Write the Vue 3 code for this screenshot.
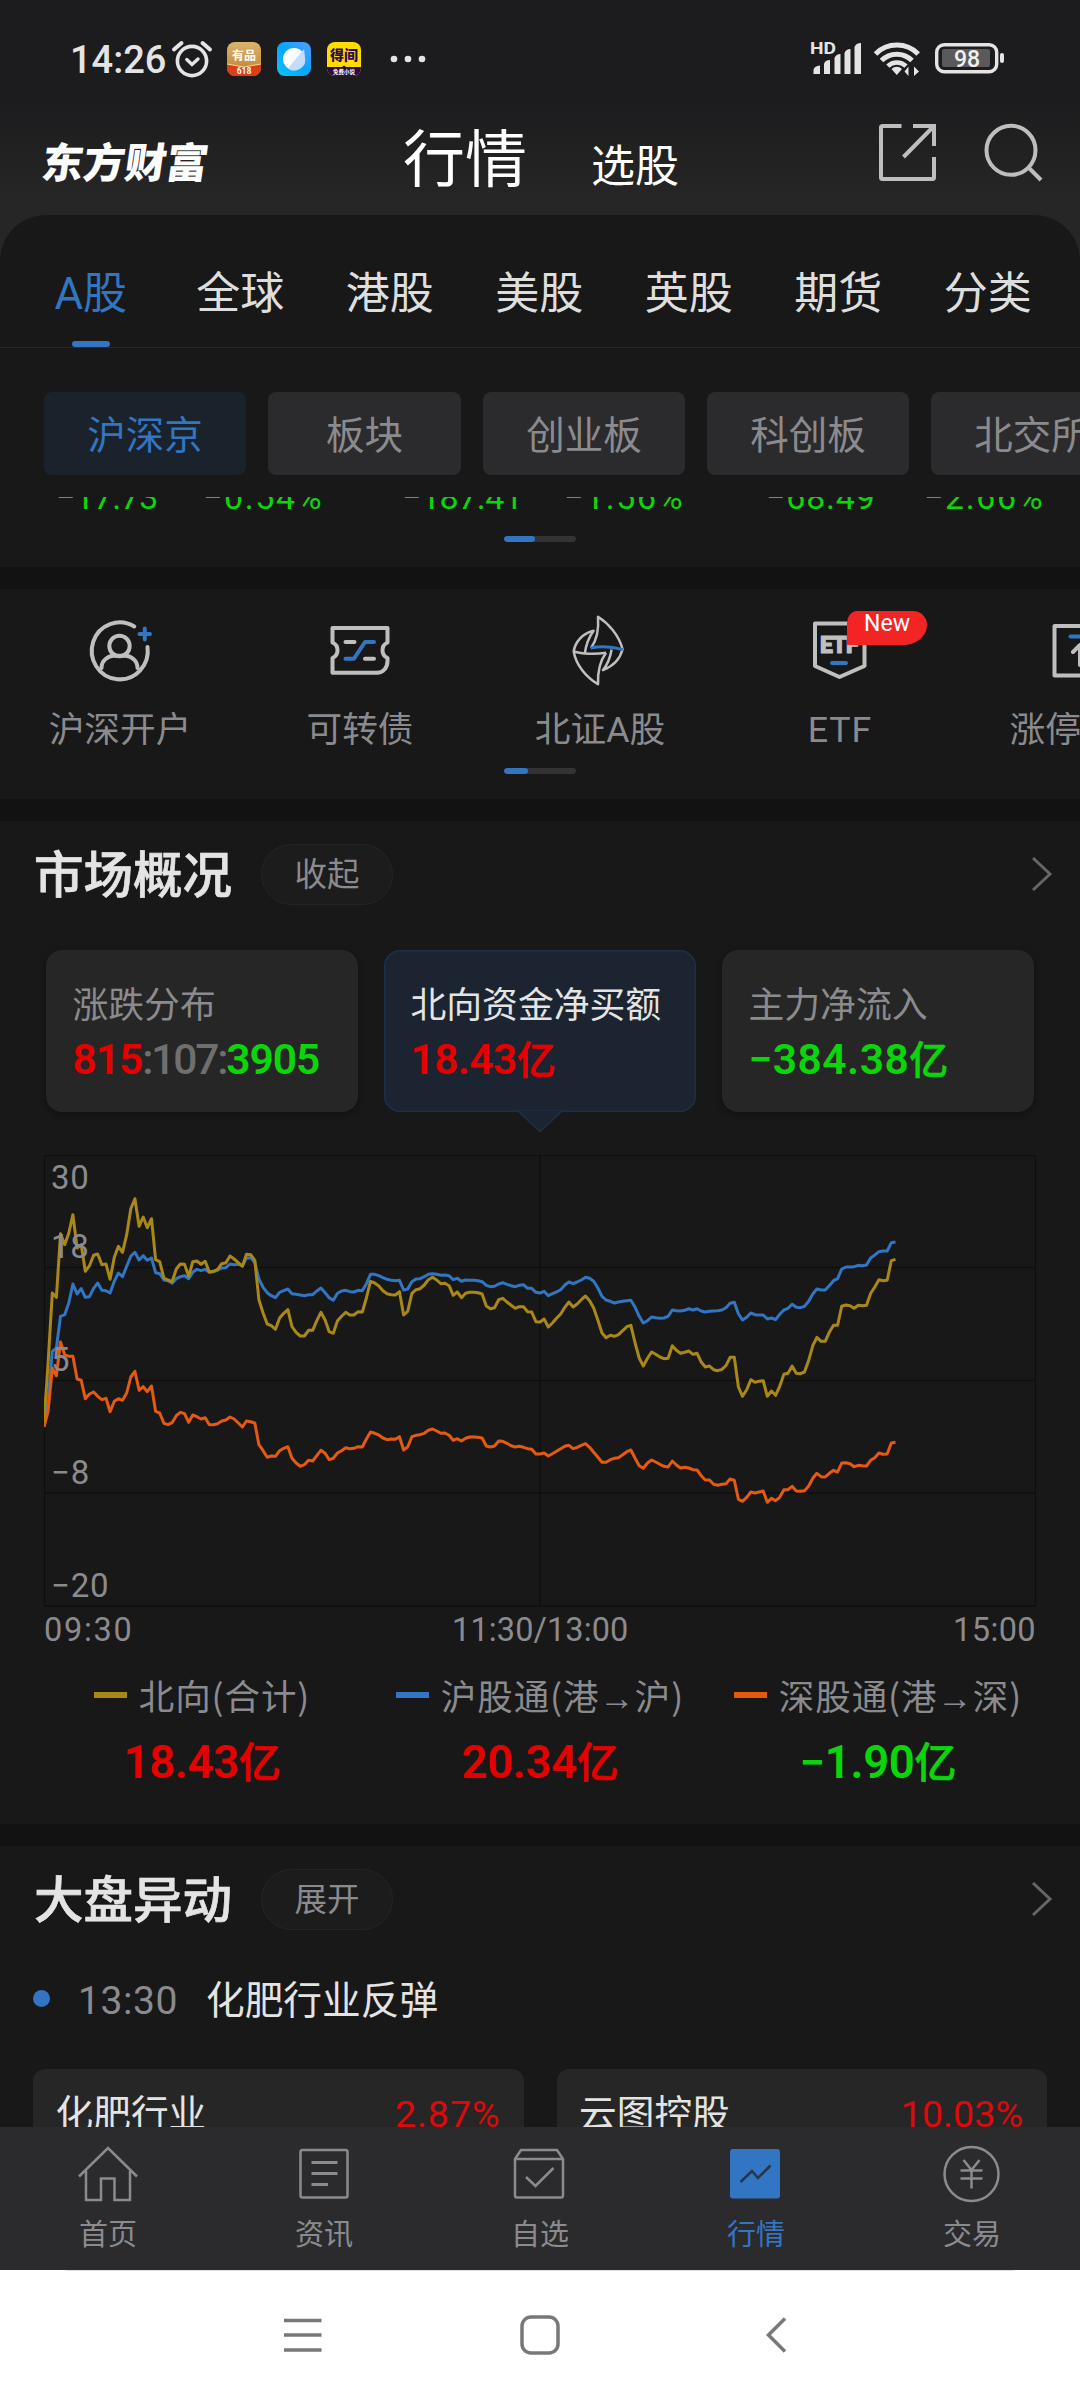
<script setup>
const tabs = ['A股', '全球', '港股', '美股', '英股', '期货', '分类']
const chips = [
  { name: '沪深京', w: 202 },
  { name: '板块', w: 193 },
  { name: '创业板', w: 202 },
  { name: '科创板', w: 202 },
  { name: '北交所', w: 202 }
]
const quotes = [
  { change: '−17.73', pct: '−0.54%' },
  { change: '−187.41', pct: '−1.56%' },
  { change: '−68.49', pct: '−2.66%' }
]
const legend = [
  { name: '北向(合计)', value: '18.43', cls: 'up', color: '#a98818' },
  { name: '沪股通(港→沪)', value: '20.34', cls: 'up', color: '#3275c2' },
  { name: '深股通(港→深)', value: '−1.90', cls: 'down', color: '#e55a08' }
]
const yLabels = [
  { text: '30', top: 3 },
  { text: '18', top: 72 },
  { text: '5', top: 185 },
  { text: '−8', top: 298 },
  { text: '−20', top: 411 }
]

/* One sample per trading minute, level measured downwards from the plot top (76 = top, 1427 = bottom). */
const total = [878,700,490,503,312,345,310,255,355,345,425,408,377,373,405,403,449,383,350,368,315,237,207,290,262,294,267,390,396,445,451,456,418,403,404,440,396,394,404,395,427,425,419,402,399,379,388,399,410,374,375,392,510,550,583,588,599,565,551,540,591,608,619,619,602,602,573,548,571,606,611,573,560,548,556,556,546,547,505,455,460,469,483,492,495,496,486,556,545,491,480,477,466,450,443,451,462,461,468,497,487,504,491,488,488,489,493,529,537,534,510,506,517,527,536,531,531,546,547,576,577,568,592,580,566,553,533,517,532,523,510,499,513,535,572,610,624,617,620,615,603,591,587,640,685,709,686,667,674,682,687,686,648,662,671,668,664,674,671,697,712,709,720,723,719,708,683,683,772,800,780,750,758,755,753,800,784,797,770,734,731,709,731,732,727,692,648,623,635,635,608,587,587,530,526,528,536,527,528,527,491,472,450,453,452,393,389]
const shanghai = [885,810,665,655,560,555,520,463,493,477,503,501,476,460,482,483,490,455,430,441,410,380,368,391,378,392,385,429,432,451,453,461,447,441,438,447,428,419,423,419,428,426,422,415,414,403,405,404,408,385,384,398,448,473,489,498,504,488,483,478,492,494,496,498,495,495,484,475,489,504,512,491,484,482,486,487,482,483,462,434,434,438,444,449,452,453,452,481,478,456,448,447,441,434,432,434,437,436,438,450,446,455,451,452,452,453,456,467,471,470,463,459,464,468,471,467,465,476,476,488,490,485,498,492,487,480,466,457,462,457,451,443,446,455,475,500,511,515,520,517,515,513,512,533,560,580,573,562,564,566,565,560,541,543,544,542,537,541,537,544,547,545,544,543,541,534,521,518,552,571,563,550,555,556,556,568,565,570,554,541,536,524,533,534,530,515,493,478,481,481,468,453,447,418,412,412,411,407,408,406,385,376,366,364,364,339,337]
const shenzhen = [892,845,715,738,637,675,680,680,748,752,807,793,787,800,810,806,846,815,807,812,790,742,725,782,771,786,769,845,850,881,885,879,858,848,852,878,856,861,868,864,885,885,882,874,871,862,868,880,892,874,876,880,945,963,983,979,980,963,956,951,986,1000,1010,1005,992,994,978,962,971,990,986,970,963,954,957,956,951,952,928,907,911,916,925,930,928,929,921,961,952,921,917,915,911,902,898,904,911,910,917,932,927,934,926,922,922,923,925,949,952,949,934,935,941,948,952,950,953,957,959,973,973,970,979,972,965,957,950,947,957,953,947,942,953,968,983,998,998,990,986,984,975,966,961,986,1008,1016,1000,991,997,1004,1010,1012,994,1006,1015,1013,1015,1020,1021,1038,1051,1051,1064,1067,1064,1062,1048,1052,1109,1115,1103,1087,1090,1087,1084,1118,1106,1113,1103,1080,1080,1070,1084,1085,1083,1069,1046,1031,1041,1042,1031,1022,1027,1000,999,1002,1011,1007,1008,1009,992,984,970,974,973,940,938]
const toLine = (s) => s.map((v, i) => `${(i * 4.1333).toFixed(1)},${((v - 76) / 3).toFixed(1)}`).join(' ')
const lines = [
  { points: toLine(shanghai), color: '#3275c2' },
  { points: toLine(shenzhen), color: '#e55a12' },
  { points: toLine(total), color: '#a98818' }
]
</script>

<template>
  <div class="page">
    <header class="top">
      <div class="status">
        <span class="clock">14:26</span>
        <svg class="alarm" width="42" height="40" viewBox="0 0 42 40" fill="none" stroke="#e4e4e4">
          <circle cx="21" cy="22" r="14.6" stroke-width="3.6" />
          <path d="M3 10.5 10.5 4M39 10.5 31.500 4" stroke-width="4" stroke-linecap="round" />
          <path d="M15.800 20.500 21 25.500 27 20" stroke-width="3.400" stroke-linecap="round" />
        </svg>
        <svg class="app" width="34" height="34" viewBox="0 0 34 34">
          <defs>
            <linearGradient id="gold" x1="0" y1="0" x2="0" y2="1"><stop offset="0" stop-color="#dcb36c" /><stop offset="1" stop-color="#b9812f" /></linearGradient>
            <linearGradient id="sky" x1="1" y1="0" x2="0" y2="1"><stop offset="0" stop-color="#559cff" /><stop offset=".5" stop-color="#04a6ff" /><stop offset="1" stop-color="#10c4ff" /></linearGradient>
            <clipPath id="tile"><rect width="34" height="34" rx="8" /></clipPath>
          </defs>
          <g clip-path="url(#tile)">
            <rect width="34" height="34" fill="url(#gold)" />
            <path d="M0 22 17 25 34 22V34H0Z" fill="#d93f18" />
            <path d="M0 22 17 25 34 22" stroke="#f6d9a0" fill="none" />
            <text x="17" y="18" font-size="12" font-weight="700" fill="#fff" text-anchor="middle">有品</text>
            <text x="17" y="32" font-size="8.500" font-weight="700" fill="#fff" text-anchor="middle">618</text>
          </g>
        </svg>
        <svg class="app" width="34" height="34" viewBox="0 0 34 34">
          <rect width="34" height="34" rx="8" fill="url(#sky)" />
          <circle cx="17" cy="17" r="11" fill="#fdfdff" />
          <path d="M27 7 28 15A11 11 0 0 1 11 26.500Z" fill="#c3dcfb" />
        </svg>
        <svg class="app" width="34" height="34" viewBox="0 0 34 34">
          <g clip-path="url(#tile)">
            <rect width="34" height="34" fill="#ffdc00" />
            <path d="M0 25H15L17 23.500 19 25H34V34H0Z" fill="#2c0a4e" />
            <text x="17" y="18" font-size="14" font-weight="900" fill="#2c0a4e" text-anchor="middle">得间</text>
            <text x="17" y="31.500" font-size="5.500" font-weight="700" fill="#fff" text-anchor="middle">免费小说</text>
          </g>
        </svg>
        <svg class="dots" width="36" height="10" viewBox="0 0 36 10" fill="#e4e4e4">
          <circle cx="4" cy="5" r="3.300" /><circle cx="18" cy="5" r="3.300" /><circle cx="32" cy="5" r="3.300" />
        </svg>
        <svg class="sys" width="200" height="40" viewBox="808 40 200 40">
          <text x="810" y="55" font-size="17" font-weight="700" fill="#e4e4e4" textLength="26" lengthAdjust="spacingAndGlyphs">HD</text>
          <g fill="#e4e4e4">
            <path d="M813.500 75V71Q814 67 820 66.500V75ZM824 75V65Q825 61 830 61V75ZM834.500 75V59Q836 55 840.500 55V75ZM844.500 75V54Q846 50 850.500 50V75ZM854.500 75V48Q856 44 861 44V75Z" stroke-linejoin="round" />
            <path d="M891.500 70 896.800 76 902 70A7.500 7.500 0 0 0 891.500 70Z" />
            <path d="M908.500 67.500V77L904.500 72.500ZM914 77V67.500L919 72.500Z" />
            <rect x="1000" y="54" width="4" height="10" rx="2" />
          </g>
          <g fill="none" stroke="#e4e4e4" stroke-width="5">
            <path d="M875.500 55A30 30 0 0 1 918.200 55" />
            <path d="M881.500 61.500A21.500 21.500 0 0 1 912 61.500" />
            <path d="M887.800 67.200A13 13 0 0 1 906 67.200" stroke-width="4.600" />
            <rect x="936.700" y="45.700" width="60" height="27" rx="7.500" stroke-width="3.400" />
          </g>
          <rect x="942" y="50" width="48" height="18" rx="2" fill="#5a5a5c" />
          <text x="967" y="67.500" font-size="23" font-weight="500" fill="#f0f0f0" text-anchor="middle">98</text>
        </svg>
      </div>
      <div class="titlebar">
        <span class="logo">东方财富</span>
        <span class="main">行情</span>
        <span class="sub">选股</span>
        <svg class="tools" width="170" height="64" viewBox="876 120 170 64" fill="none" stroke="#bebebe" stroke-width="4">
          <path d="M901.500 126H882.500Q881 126 881 127.500V177.500Q881 179 882.500 179H932.500Q934 179 934 177.500V157" />
          <path d="M913 126H934V146M933.500 126.500 903.500 157" />
          <circle cx="1011" cy="150.300" r="24.500" />
          <path d="M1028.500 167.500 1041 180" />
        </svg>
      </div>
    </header>

    <section class="panel">
      <nav class="tabs">
        <span v-for="(t, i) in tabs" :key="t" class="tab" :class="{ on: i === 0 }">{{ t }}</span>
      </nav>
      <div class="chips">
        <span v-for="(c, i) in chips" :key="c.name" class="chip" :class="{ on: i === 0 }" :style="{ width: c.w + 'px' }">{{ c.name }}</span>
      </div>
      <div class="quotes">
        <div v-for="q in quotes" :key="q.change" class="quote"><span class="chg">{{ q.change }}</span><span class="pct">{{ q.pct }}</span></div>
      </div>
      <div class="pager"><i class="a"></i></div>
    </section>

    <section class="entries">
      <div class="entry-row">
        <div class="entry">
          <svg width="72" height="72" viewBox="0 0 72 72" fill="none" stroke="#bfbfbf" stroke-width="4" stroke-linecap="round">
            <path d="M50.300 11.500A28 28.500 0 1 0 63.500 32" />
            <circle cx="35.500" cy="31" r="10.200" />
            <path d="M17.500 53C17.500 45 24.500 41 29.500 40.800H41.500C46.500 41 53.500 45 53.500 53" />
            <path d="M55.500 19H66M60.800 13.500V24.500" stroke="#3275c2" />
          </svg>
          <span>沪深开户</span>
        </div>
        <div class="entry">
          <svg width="72" height="72" viewBox="0 0 72 72" fill="none" stroke="#bfbfbf" stroke-width="4" stroke-linecap="round" stroke-linejoin="round">
            <path d="M8.500 13H63.500V27.500A8.500 8.500 0 0 0 63.500 43V46C63.500 53 59 57.700 53 57.700H8.500V43A8.500 8.500 0 0 0 8.500 27.500Z" />
            <path d="M21.500 27H30.500M41 43.700H50" />
            <path d="M21.500 43.700H30L41 27H50" stroke="#3275c2" />
          </svg>
          <span>可转债</span>
        </div>
        <div class="entry">
          <svg width="72" height="72" viewBox="0 0 72 72" fill="none" stroke="#bfbfbf" stroke-width="2.500" stroke-linejoin="round">
            <path d="M27 33C33 25 35 15 34 1.700C44 8 55 20 58.600 34.300C56 44 50 51 39 55C44 49 46.500 41 47.600 34.500" />
            <path d="M42 37.700C36 46 33.500 56 34 69.300C22 62 12 50 9.700 36.500C11 27 19 18 29.500 15.700C25 22 21.800 31 20.800 38.500" />
            <path d="M9.700 36.500C18 39 32 39.500 42 37.700" />
            <path d="M26.500 33Q42 30 59 34.600" stroke="#3275c2" stroke-width="3" />
          </svg>
          <span>北证A股</span>
        </div>
        <div class="entry">
          <svg width="72" height="72" viewBox="0 0 72 72" fill="none" stroke="#bfbfbf" stroke-width="4" stroke-linecap="round" stroke-linejoin="round">
            <path d="M11 8.500H60.500V51L35.500 62 11 51Z" />
            <path d="M28 48H42" stroke="#3275c2" />
            <text x="16" y="38" font-size="23" font-weight="900" fill="#bfbfbf" stroke="#bfbfbf" stroke-width="1" textLength="38.500">ETF</text>
          </svg>
          <b class="badge">New</b>
          <span class="latin">ETF</span>
        </div>
        <div class="entry last">
          <svg width="72" height="72" viewBox="0 0 72 72" fill="none" stroke="#bfbfbf" stroke-width="4" stroke-linecap="round" stroke-linejoin="round">
            <rect x="10.500" y="11" width="50" height="49.500" />
            <path d="M26.500 21.500H46" stroke="#3275c2" />
            <path d="M36 50V31M29 37 36 30 43 37" />
          </svg>
          <span>涨停</span>
        </div>
      </div>
      <div class="pager"><i class="b"></i></div>
    </section>

    <section class="market">
      <div class="head">
        <h2>市场概况</h2><span class="pill">收起</span>
        <svg width="22" height="38" viewBox="0 0 22 38" fill="none" stroke="#666" stroke-width="3"><path d="M2 3 19 19 2 35" /></svg>
      </div>
      <div class="stats">
        <div class="stat">
          <p>涨跌分布</p>
          <strong class="ratio"><span class="up">815</span><span class="flat">:107:</span><span class="down">3905</span></strong>
        </div>
        <div class="stat on">
          <p>北向资金净买额</p>
          <strong class="up">18.43<em>亿</em></strong>
          <svg class="tip" width="46" height="23" viewBox="0 0 46 23"><path d="M1 1 23 21.500 45 1" fill="#1b2430" stroke="#1d3048" stroke-width="1.500" /></svg>
        </div>
        <div class="stat">
          <p>主力净流入</p>
          <strong class="down wide">−384.38<em>亿</em></strong>
        </div>
      </div>
      <div class="chart">
        <svg width="992" height="452" viewBox="0 0 992 452">
          <g stroke="#0f0f0f" stroke-width="1.500" fill="none">
            <rect x=".5" y=".5" width="991" height="450.500" />
            <path d="M0 112.500H992M0 225.500H992M0 338H992M496 0V451" />
          </g>
          <polyline v-for="l in lines" :key="l.color" :points="l.points" :stroke="l.color" fill="none" stroke-width="3" stroke-linejoin="round" />
        </svg>
        <span v-for="y in yLabels" :key="y.text" class="ylab" :style="{ top: y.top + 'px' }">{{ y.text }}</span>
      </div>
      <div class="times"><span class="open">09:30</span><span class="noon">11:30/13:00</span><span>15:00</span></div>
      <div class="legend">
        <div v-for="l in legend" :key="l.name" class="leg">
          <p><i :style="{ background: l.color }"></i><span>{{ l.name.split('→')[0] }}<span v-if="l.name.includes('→')" class="arrow">→</span>{{ l.name.split('→')[1] }}</span></p>
          <strong :class="l.cls">{{ l.value }}<em>亿</em></strong>
        </div>
      </div>
    </section>

    <section class="moves">
      <div class="head">
        <h2>大盘异动</h2><span class="pill">展开</span>
        <svg width="22" height="38" viewBox="0 0 22 38" fill="none" stroke="#666" stroke-width="3"><path d="M2 3 19 19 2 35" /></svg>
      </div>
      <div class="event"><i></i><time>13:30</time><span>化肥行业反弹</span></div>
      <div class="stocks">
        <div class="stock"><span>化肥行业</span><b class="wide">2.87%</b></div>
        <div class="stock"><span>云图控股</span><b>10.03%</b></div>
      </div>
    </section>

    <nav class="bottom">
      <div class="nav">
        <svg width="64" height="60" viewBox="0 0 64 60"><path d="M3 32.500 32 4 61 32.500M10 27V56H25V34.500H38.500V56H54V27" /></svg>
        <span>首页</span>
      </div>
      <div class="nav">
        <svg width="64" height="60" viewBox="0 0 64 60"><rect x="8.500" y="6" width="47" height="47.500" rx="2" /><path d="M19.500 18.500H45.500M19.500 29.500H45.500M19.500 40.500H36" stroke-width="3" /></svg>
        <span>资讯</span>
      </div>
      <div class="nav">
        <svg width="64" height="60" viewBox="0 0 64 60"><path d="M7 15 13 6H49L55 15V51.500Q55 53.500 53 53.500H9Q7 53.500 7 51.500ZM7 15H55M18 33 27.500 42 45.500 24" /></svg>
        <span>自选</span>
      </div>
      <div class="nav on">
        <svg width="64" height="60" viewBox="0 0 64 60"><rect x="6" y="5" width="50" height="49.500" rx="3" fill="#3275c2" stroke="none" /><path d="M16.500 38 28 27 34 34 46.500 21.500" stroke="#22364c" /></svg>
        <span>行情</span>
      </div>
      <div class="nav">
        <svg width="64" height="60" viewBox="0 0 64 60"><circle cx="31.500" cy="30" r="27" /><path d="M23.500 16 31.500 26 39.500 16M31.500 26V44.500M20.500 26.500H42.500M20.500 34.500H42.500" /></svg>
        <span>交易</span>
      </div>
    </nav>
    <footer class="android">
      <svg width="40" height="40" viewBox="0 0 40 40"><path d="M2 5.500H39.500M2 20H39.500M2 35H39.500" /></svg>
      <svg width="40" height="40" viewBox="0 0 40 40"><rect x="2" y="2" width="36" height="36" rx="9" /></svg>
      <svg width="40" height="40" viewBox="0 0 40 40"><path d="M28 3.500 11.500 20 28 36.500" /></svg>
    </footer>
  </div>
</template>

<style>
body { background: #181818; }
</style>

<style scoped>
.page {
  width: 1080px; height: 2400px; overflow: hidden; background: #121212; color: #e4e4e4;
  font-family: Roboto, "Noto Sans CJK SC", sans-serif; display: flex; flex-direction: column;
}
.page > * { flex: none; box-sizing: border-box; }
p, h2 { margin: 0; }
em, i { font-style: normal; }
svg { display: block; flex: none; }
.up { color: #e60000; }
.down { color: #0bd50b; }
.flat { color: #6f6f6f; font-weight: 500; letter-spacing: -2.200px; }

.top { height: 260px; margin-bottom: -45px; background: linear-gradient(#1c1c1e 0, #1c1c1e 100px, #262626 200px); }
.status { height: 118px; padding-left: 70px; display: flex; align-items: center; box-sizing: border-box; }
.clock { width: 101px; font-size: 38px; font-weight: 500; line-height: 44px; margin-top: 1px; }
.app { margin-left: 16px; }
.alarm + .app { margin-left: 14px; }
.dots { margin-left: 29px; }
.sys { margin-left: auto; margin-right: 72px; }
.titlebar { height: 97px; display: flex; align-items: flex-start; color: #fff; }
.logo { margin: 21px 0 0 42px; width: 170px; font-size: 41.500px; font-weight: 900; line-height: 50px; transform: skewX(-8deg); white-space: nowrap; }
.main { margin: 7px 0 0 191px; width: 188px; font-size: 62px; line-height: 72px; white-space: nowrap; }
.sub { margin-top: 22px; font-size: 44px; line-height: 54px; white-space: nowrap; }
.tools { margin: 2px 34px 0 auto; }

.panel { height: 352px; background: #181818; border-radius: 46px 46px 0 0; }
.tabs { height: 133px; padding: 0 17.500px 0 16px; display: flex; border-bottom: 1px solid #2a2a2a; box-sizing: border-box; }
.tab { flex: 1; text-align: center; font-size: 44px; line-height: 158px; height: 132px; color: #dedede; position: relative; white-space: nowrap; }
.tab.on { color: #3275c2; }
.tab.on::after { content: ""; position: absolute; left: 50%; bottom: 0; width: 38px; height: 6px; margin-left: -19px; border-radius: 3px; background: #3275c2; }
.chips { margin-top: 44px; padding-left: 44px; display: flex; gap: 22px; }
.chip { flex: none; height: 83px; border-radius: 8px; background: #2b2b2d; color: #8b8b8f; font-size: 38.500px; line-height: 87px; text-align: center; }
.chip.on { background: #1a222b; color: #3275c2; }
.quotes { margin-top: 22px; height: 22px; overflow: hidden; display: grid; grid-template-columns: 346px 364px auto; color: #0bd50b; font-size: 34px; line-height: 40px; padding-left: 56px; }
.quote { margin-top: -20px; display: grid; grid-template-columns: 147px auto; white-space: nowrap; }
.quote:nth-child(2) { grid-template-columns: 162px auto; }
.quote:nth-child(3) { grid-template-columns: 158px auto; }
.quote:nth-child(3) .chg { letter-spacing: .8px; }
.chg { letter-spacing: -.5px; }
.pct { letter-spacing: 1.600px; }
.pager { width: 72px; height: 6px; border-radius: 3px; background: #333; margin: 17px auto 0; overflow: hidden; }
.pager i { display: block; height: 6px; border-radius: 3px; background: #3275c2; }
.pager .a { width: 31px; }
.pager .b { width: 24px; }

.entries { margin-top: 22px; height: 210px; background: #181818; padding-top: 26px; }
.entry-row { display: flex; width: 1200px; height: 136px; }
.entry { width: 240px; position: relative; display: flex; flex-direction: column; align-items: center; color: #8b8b8f; }
.entry > span { font-size: 35.700px; line-height: 44px; margin-top: 21px; white-space: nowrap; }
.entry > .latin { letter-spacing: 1px; }
.entry.last > span { align-self: flex-start; margin-left: 49.500px; }
.badge { position: absolute; left: 127px; top: -4px; width: 80px; height: 34px; border-radius: 10px 14px 24px 0 / 12px 14px 20px 0; background: #f22424; color: #fff; font-size: 23px; font-weight: 400; line-height: 26px; text-align: center; }
.entries .pager { margin-top: 17px; }

.market { margin-top: 22px; height: 1003px; background: #181818; }
.head { height: 107px; padding-left: 34px; padding-right: 27px; display: flex; align-items: center; box-sizing: border-box; }
.head h2 { width: 227px; font-size: 49.500px; line-height: 60px; font-weight: 500; white-space: nowrap; -webkit-text-stroke: .7px currentColor; margin-top: 2px; }
.pill { width: 132px; height: 61px; box-sizing: border-box; border: 1.500px solid #252525; border-radius: 31px; background: #1c1c1c; color: #8b8b8f; font-size: 32.500px; line-height: 60px; text-align: center; }
.head svg { margin-left: auto; margin-bottom: 2px; }
.stats { margin-top: 22px; padding: 0 46px; display: flex; gap: 26px; }
.stat { position: relative; flex: 1; height: 162px; border-radius: 16px; background: #262626; box-shadow: 0 2px 6px rgba(0, 0, 0, .35); box-sizing: border-box; padding: 32px 0 0 26.500px; white-space: nowrap; }
.stat p { font-size: 35.800px; line-height: 48px; color: #8b8b8f; }
.stat strong { display: block; font-size: 42.500px; line-height: 56px; font-weight: 600; margin-top: 2px; letter-spacing: -.6px; }
.stat strong .up, .stat strong .down { letter-spacing: -1px; }
.stat strong.wide { letter-spacing: .5px; }
.stat em { font-size: 39px; }
em { font-weight: 500; -webkit-text-stroke: .6px currentColor; }
.stat.on { background: #1b2430; box-shadow: inset 0 0 0 1.500px #1d3048; }
.stat.on p { color: #e4e4e4; }
.tip { position: absolute; left: 133px; top: 160px; }
.chart { position: relative; margin: 43px 44px 0; height: 452px; }
.ylab { position: absolute; left: 7px; font-size: 33px; line-height: 40px; color: #8b8b8f; letter-spacing: .8px; }
.times { margin: 3px 44px 0; display: flex; justify-content: space-between; font-size: 32.500px; line-height: 40px; color: #8b8b8f; letter-spacing: .4px; }
.times .open { letter-spacing: 1.700px; margin-right: -6px; }
.times .noon { letter-spacing: .1px; }
.legend { margin: 21px 33px 0; display: flex; }
.leg { flex: 1; text-align: center; }
.leg p { display: flex; align-items: center; justify-content: center; font-family: "Noto Sans CJK SC", sans-serif; font-size: 35.500px; line-height: 48px; height: 48px; color: #8b8b8f; white-space: nowrap; letter-spacing: .9px; }
.leg p i { width: 33px; height: 6px; margin-right: 12px; }
.arrow { font-family: "Liberation Serif", serif; letter-spacing: 0; line-height: 1; }
.leg strong { display: block; margin-top: 16px; font-size: 45.500px; line-height: 56px; font-weight: 600; letter-spacing: -.3px; }
.leg em { font-size: 42px; }

.moves { margin-top: 22px; height: 281px; background: #181818; overflow: hidden; }
.event { height: 50px; margin-top: 20px; padding-left: 33px; display: flex; align-items: center; }
.event i { width: 17px; height: 17px; border-radius: 50%; background: #3275c2; }
.event time { margin: 5px 0 0 28px; width: 128px; font-size: 39px; color: #8b8b8f; line-height: 50px; letter-spacing: .6px; }
.event span { font-size: 38.700px; line-height: 50px; margin-top: 5px; }
.stocks { margin-top: 46px; padding: 0 33px; display: flex; gap: 33px; }
.stock { flex: 1; height: 120px; border-radius: 12px; background: #262626; padding: 21px 24px 0 22.500px; display: flex; justify-content: space-between; box-sizing: border-box; font-size: 37.700px; line-height: 48px; }
.stock b { font-weight: 400; color: #dc0a0a; }
.stock b.wide { letter-spacing: .9px; margin-right: -1px; }

.bottom { height: 143px; background: #2b2b2d; display: flex; padding-top: 17px; }
.nav { flex: 1; display: flex; flex-direction: column; align-items: center; color: #8b8b8f; font-size: 29px; line-height: 36px; }
.nav svg { fill: none; stroke: #8b8b8f; stroke-width: 2.500px; }
.nav span { margin-top: 13px; }
.nav.on { color: #3275c2; }
.android { height: 130px; background: linear-gradient(#e0e0e0, #e0e0e0) 50% 0 / 948px 1px no-repeat #fff; padding: 45px 283px 0 282px; display: flex; justify-content: space-between; }
.android svg { fill: none; stroke: #787878; stroke-width: 3.500px; }
</style>
